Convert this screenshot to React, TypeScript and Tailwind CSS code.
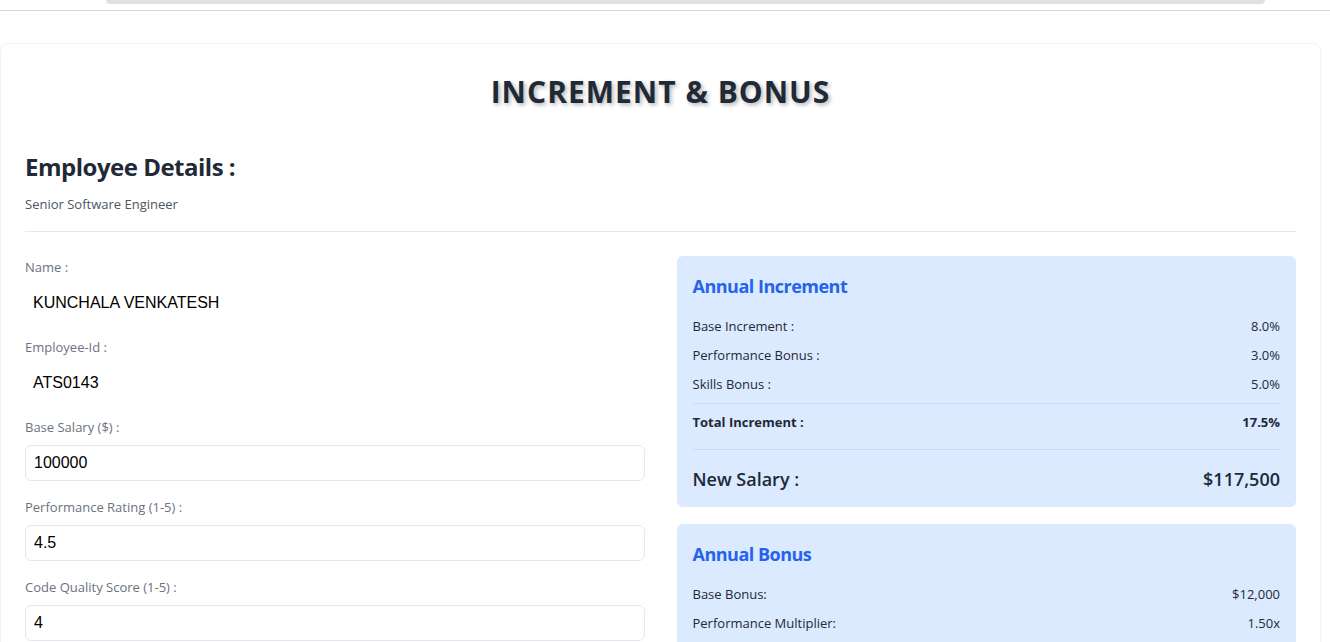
const font = "font-['Open_Sans','Noto_Sans',sans-serif]";

function Field({ label, value, input }: { label: string; value: string; input?: boolean }) {
  return (
    <div className="mb-4 flex flex-col">
      <label className="mb-2 h-5 text-[13px] leading-5 text-[#6b7280]">{label}</label>
      {input ? (
        <input
          readOnly
          value={value}
          className="h-9 w-full rounded-md border border-[#e5e7eb] bg-white px-2 font-['Liberation_Sans',Arial,sans-serif] text-base text-black outline-none"
        />
      ) : (
        <div className="flex h-9 items-center px-2 font-['Liberation_Sans',Arial,sans-serif] text-base text-black">
          {value}
        </div>
      )}
    </div>
  );
}

function Row({ label, value, bold }: { label: string; value: string; bold?: boolean }) {
  return (
    <div className={`flex h-5 items-center justify-between text-[13px] text-[#1f2937] ${bold ? 'font-bold' : ''}`}>
      <span>{label}</span>
      <span>{value}</span>
    </div>
  );
}

export default function App() {
  return (
    <div className={`min-h-screen bg-white ${font}`}>
      {/* browser-ish top strip */}
      <div className="h-[11px] border-b border-[#d4d4d4] pl-[106px]">
        <div className="h-1 w-[1159px] rounded-b-full bg-[#e0e0e0]" />
      </div>

      <div className="mt-8 w-[1321px] rounded-lg border border-[#f3f4f6] px-6 pb-8 pt-[30px] shadow-[0_1px_2px_rgba(0,0,0,0.03)]">
        <h1 className="text-center text-[30px] font-bold leading-9 tracking-[1px] text-[#1f2937] [text-shadow:2px_2px_4px_rgba(0,0,0,0.3)]">
          INCREMENT &amp; BONUS
        </h1>

        <div className="mt-[41px] border-b border-[#e5e7eb] pb-[17px]">
          <h2 className="text-2xl font-bold leading-8 tracking-[-0.5px] text-[#1f2937]">Employee Details :</h2>
          <p className="mt-[11px] text-[13px] leading-5 text-[#4b5563]">Senior Software Engineer</p>
        </div>

        <div className="mt-6 grid grid-cols-2 gap-8">
          {/* left: inputs */}
          <div className="pt-px">
            <Field label="Name :" value="KUNCHALA VENKATESH" />
            <Field label="Employee-Id :" value="ATS0143" />
            <Field label="Base Salary ($) :" value="100000" input />
            <Field label="Performance Rating (1-5) :" value="4.5" input />
            <Field label="Code Quality Score (1-5) :" value="4" input />
          </div>

          {/* right: results */}
          <div className="flex flex-col gap-[17px]">
            <div className="rounded-md bg-[#dbeafe] p-4 pb-[14px]">
              <h3 className="mb-[17px] text-lg font-bold leading-7 tracking-[-0.5px] text-[#2563eb]">Annual Increment</h3>
              <div className="flex flex-col gap-[9px]">
                <Row label="Base Increment :" value="8.0%" />
                <Row label="Performance Bonus :" value="3.0%" />
                <Row label="Skills Bonus :" value="5.0%" />
              </div>
              <div className="mt-2 border-t border-[#bfdbfe] pt-[9px]">
                <Row label="Total Increment :" value="17.5%" bold />
              </div>
              <div className="mt-4 flex h-7 items-center justify-between border-t border-[#bfdbfe] pt-[15px] box-content text-lg font-semibold text-[#1f2937]">
                <span>New Salary :</span>
                <span>$117,500</span>
              </div>
            </div>

            <div className="rounded-md bg-[#dbeafe] p-4">
              <h3 className="mb-[17px] text-lg font-bold leading-7 tracking-[-0.5px] text-[#2563eb]">Annual Bonus</h3>
              <div className="flex flex-col gap-[9px]">
                <Row label="Base Bonus:" value="$12,000" />
                <Row label="Performance Multiplier:" value="1.50x" />
              </div>
              <div className="mt-2 h-10 border-t border-[#bfdbfe]" />
            </div>
          </div>
        </div>
      </div>
    </div>
  );
}
